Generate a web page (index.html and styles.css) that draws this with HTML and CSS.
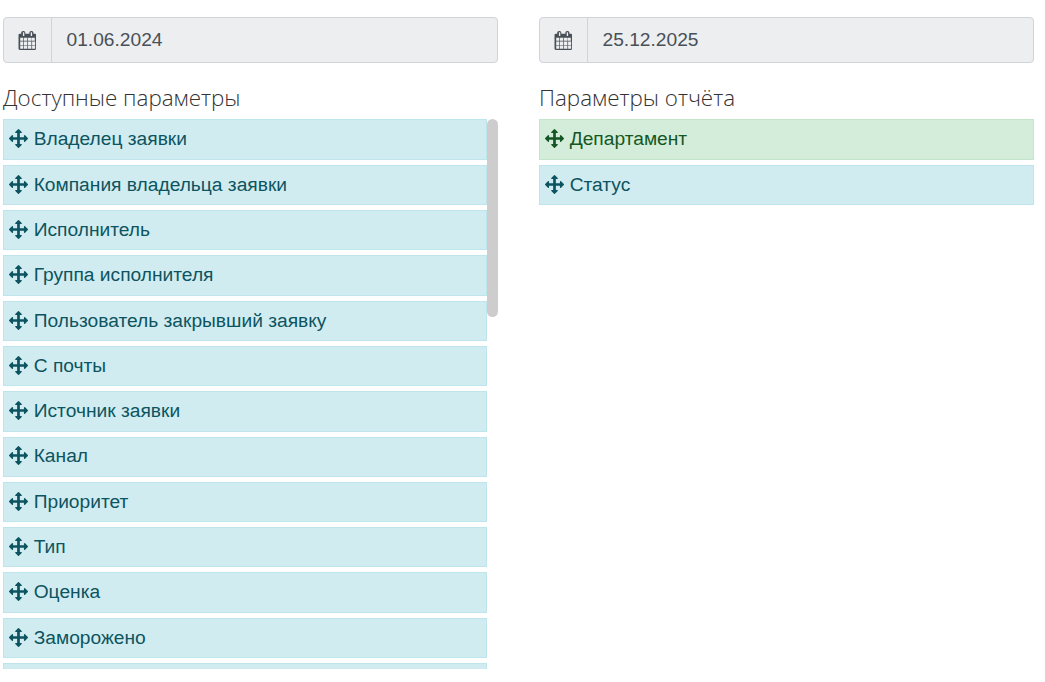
FILE: index.html
```html
<!DOCTYPE html>
<html lang="ru">
<head>
<meta charset="utf-8">
<title>Параметры отчёта</title>
<link rel="stylesheet" href="styles.css">
</head>
<body>
<svg class="defs" aria-hidden="true">
<symbol id="i-move" viewBox="0 0 1792 1792"><path fill="currentColor" d="M1792 896q0 26-19 45l-256 256q-19 19-45 19t-45-19-19-45v-128h-384v384h128q26 0 45 19t19 45-19 45l-256 256q-19 19-45 19t-45-19l-256-256q-19-19-19-45t19-45 45-19h128v-384h-384v128q0 26-19 45t-45 19-45-19l-256-256q-19-19-19-45t19-45l256-256q19-19 45-19t45 19 19 45v128h384v-384h-128q-26 0-45-19t-19-45 19-45l256-256q19-19 45-19t45 19l256 256q19 19 19 45t-19 45-45 19h-128v384h384v-128q0-26 19-45t45-19 45 19l256 256q19 19 19 45z"/></symbol>
<symbol id="i-cal" viewBox="0 0 1664 1792"><path fill="currentColor" d="M192 1664h288v-288h-288v288zm352 0h320v-288h-320v288zm-352-352h288v-320h-288v320zm352 0h320v-320h-320v320zm-352-384h288v-288h-288v288zm736 736h320v-288h-320v288zm-384-736h320v-288h-320v288zm768 736h288v-288h-288v288zm-384-352h320v-320h-320v320zm-352-864v-288q0-13-9.500-22.500t-22.500-9.500h-64q-13 0-22.500 9.500t-9.500 22.500v288q0 13 9.500 22.500t22.500 9.500h64q13 0 22.500-9.500t9.500-22.500zm736 864h288v-320h-288v320zm-384-384h320v-288h-320v288zm352 0h288v-288h-288v288zm32-480v-288q0-13-9.500-22.500t-22.500-9.500h-64q-13 0-22.500 9.500t-9.500 22.500v288q0 13 9.500 22.500t22.500 9.500h64q13 0 22.500-9.500t9.500-22.500zm384-64v1280q0 52-38 90t-90 38h-1408q-52 0-90-38t-38-90v-1280q0-52 38-90t90-38h128v-96q0-66 47-113t113-47h64q66 0 113 47t47 113v96h384v-96q0-66 47-113t113-47h64q66 0 113 47t47 113v96h128q52 0 90 38t38 90z"/></symbol>
</svg>
<main class="page">
  <section class="col">
    <div class="date">
      <span class="date-addon"><svg class="ico-cal"><use href="#i-cal"/></svg></span>
      <span class="date-value">01.06.2024</span>
    </div>
    <h2 class="title">Доступные параметры</h2>
    <div class="list-wrap">
      <ul class="list">
        <li class="item"><svg class="ico-move"><use href="#i-move"/></svg>Владелец заявки</li>
        <li class="item"><svg class="ico-move"><use href="#i-move"/></svg>Компания владельца заявки</li>
        <li class="item"><svg class="ico-move"><use href="#i-move"/></svg>Исполнитель</li>
        <li class="item"><svg class="ico-move"><use href="#i-move"/></svg>Группа исполнителя</li>
        <li class="item"><svg class="ico-move"><use href="#i-move"/></svg>Пользователь закрывший заявку</li>
        <li class="item"><svg class="ico-move"><use href="#i-move"/></svg>С почты</li>
        <li class="item"><svg class="ico-move"><use href="#i-move"/></svg>Источник заявки</li>
        <li class="item"><svg class="ico-move"><use href="#i-move"/></svg>Канал</li>
        <li class="item"><svg class="ico-move"><use href="#i-move"/></svg>Приоритет</li>
        <li class="item"><svg class="ico-move"><use href="#i-move"/></svg>Тип</li>
        <li class="item"><svg class="ico-move"><use href="#i-move"/></svg>Оценка</li>
        <li class="item"><svg class="ico-move"><use href="#i-move"/></svg>Заморожено</li>
        <li class="item"></li>
      </ul>
      <div class="thumb"></div>
    </div>
  </section>
  <section class="col">
    <div class="date">
      <span class="date-addon"><svg class="ico-cal"><use href="#i-cal"/></svg></span>
      <span class="date-value">25.12.2025</span>
    </div>
    <h2 class="title">Параметры отчёта</h2>
    <div class="list-wrap">
      <ul class="list list-full">
        <li class="item item-success"><svg class="ico-move"><use href="#i-move"/></svg>Департамент</li>
        <li class="item"><svg class="ico-move"><use href="#i-move"/></svg>Статус</li>
      </ul>
    </div>
  </section>
</main>
</body>
</html>
```
FILE: styles.css
```css
* { box-sizing: border-box; }
html, body { margin: 0; height: 100%; background: #fff; overflow: hidden; }
body { font-family: "Liberation Sans", Arial, sans-serif; color: #333; }
.defs { display: none; }
.page { display: flex; gap: 41px; padding: 17px 11px 0 3px; }
.col { flex: 0 0 495px; display: flex; flex-direction: column; }
.date { display: flex; height: 46px; background: #eceef0; border: 1px solid #ced4da; border-radius: 4px; }
.date-addon { flex: 0 0 48px; display: flex; align-items: center; justify-content: center; padding-right: 1px; border-right: 1px solid #ced4da; color: #495057; }
.ico-cal { width: 18px; height: 19px; }
.date-value { padding-left: 14.500px; font-size: 19.200px; line-height: 44px; color: #495057; }
.title { margin: 21px 0 8.450px; font: 300 22.400px/27px "Open Sans", sans-serif; color: #333; }
.list-wrap { position: relative; height: 549.550px; overflow: hidden; }
.list { list-style: none; margin: 0; padding: 0 11px 0 0; display: flex; flex-direction: column; gap: 5px; }
.list-full { padding-right: 0; }
.item { flex: none; display: flex; align-items: center; height: 40.300px; padding: 0 5.300px 0.400px; background: #d1ecf1; border: 1px solid #bee5eb; color: #0c5460; font-size: 19.200px; }
.item-success { background: #d4edda; border-color: #c3e6cb; color: #155724; }
.ico-move { width: 19px; height: 19px; margin: 0 5.400px 1px 0; flex: none; }
.thumb { position: absolute; top: 0; right: 0; width: 11px; height: 198px; background: #cdcdcd; border-radius: 6px; }
```
